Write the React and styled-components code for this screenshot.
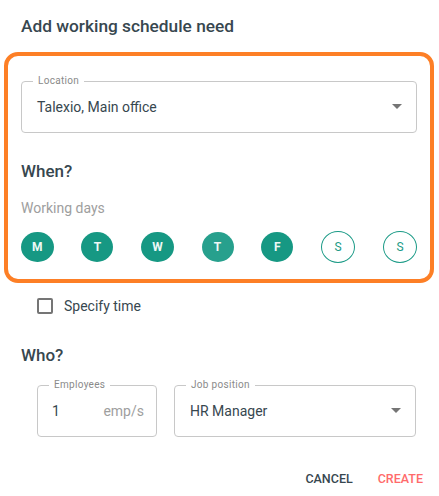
import styled, { createGlobalStyle } from "styled-components";

const GlobalStyle = createGlobalStyle`
    body {
        margin: 0;
        background: #ffffff;
        font-family: Roboto, "Liberation Sans", sans-serif;
        color: #37474f;
    }
`;

const days = [
    { key: "mon", label: "M", on: true },
    { key: "tue", label: "T", on: true },
    { key: "wed", label: "W", on: true },
    { key: "thu", label: "T", on: true, hover: true },
    { key: "fri", label: "F", on: true },
    { key: "sat", label: "S", on: false },
    { key: "sun", label: "S", on: false },
];

function App() {
    const renderedDays = days.map((day) => (
        <DayButton key={day.key} $on={day.on} $hover={day.hover}>
            {day.label}
        </DayButton>
    ));

    return (
        <Dialog>
            <GlobalStyle />
            <Title>Add working schedule need</Title>

            <Highlight>
                <Field>
                    <FieldLabel>Location</FieldLabel>
                    <FieldValue>Talexio, Main office</FieldValue>
                    <Caret />
                </Field>

                <Heading $top={28}>When?</Heading>
                <SubLabel>Working days</SubLabel>
                <DaysRow>{renderedDays}</DaysRow>
            </Highlight>

            <CheckRow>
                <CheckBox />
                <span>Specify time</span>
            </CheckRow>

            <Heading $top={28} $indent={21}>
                Who?
            </Heading>

            <FieldsRow>
                <Field $width={120}>
                    <FieldLabel>Employees</FieldLabel>
                    <FieldValue $pad={14}>1</FieldValue>
                    <Unit>emp/s</Unit>
                </Field>
                <Field $grow>
                    <FieldLabel>Job position</FieldLabel>
                    <FieldValue>HR Manager</FieldValue>
                    <Caret />
                </Field>
            </FieldsRow>

            <Actions>
                <ActionButton>Cancel</ActionButton>
                <ActionButton $primary>Create</ActionButton>
            </Actions>
        </Dialog>
    );
}

const Dialog = styled.div`
    width: 439px;
    height: 496px;
    box-sizing: border-box;
    display: flex;
    flex-direction: column;
    overflow: hidden;
`;

const Title = styled.h2`
    margin: 0;
    padding: 15px 21px 0;
    font-size: 17.3px;
    line-height: 22px;
    font-weight: 500;
    color: #37474f;
`;

const Highlight = styled.div`
    margin: 15px 5px 0 4px;
    border: 4px solid #fd7f26;
    border-radius: 14px;
    padding: 25px 13px 16px;
    display: flex;
    flex-direction: column;
`;

const Field = styled.div`
    position: relative;
    box-sizing: border-box;
    height: 52px;
    width: ${({ $width }) => ($width ? `${$width}px` : "auto")};
    flex: ${({ $grow }) => ($grow ? "1" : "none")};
    border: 1px solid #c8c8c8;
    border-radius: 4px;
    display: flex;
    align-items: center;
`;

const FieldLabel = styled.span`
    position: absolute;
    top: -7px;
    left: 11px;
    padding: 0 5px;
    background: #ffffff;
    font-size: 10px;
    line-height: 12px;
    color: #8a8a8a;
    letter-spacing: 0.3px;
`;

const FieldValue = styled.span`
    flex: 1;
    padding-left: ${({ $pad }) => ($pad ? `${$pad}px` : "15px")};
    font-size: 14px;
    color: #37474f;
`;

const Caret = styled.span`
    width: 0;
    height: 0;
    margin-right: 14px;
    margin-top: -2px;
    border-left: 5px solid transparent;
    border-right: 5px solid transparent;
    border-top: 5px solid #757575;
`;

const Unit = styled.span`
    padding-right: 12px;
    font-size: 14px;
    color: #9e9e9e;
`;

const Heading = styled.h3`
    margin: ${({ $top }) => $top}px 0 0 ${({ $indent }) => ($indent ? `${$indent}px` : "0")};
    font-size: 17px;
    line-height: 20px;
    font-weight: 500;
    color: #37474f;
`;

const SubLabel = styled.div`
    margin-top: 17px;
    font-size: 14px;
    line-height: 20px;
    color: #9e9e9e;
`;

const DaysRow = styled.div`
    margin-top: 13px;
    display: flex;
    justify-content: space-between;
    align-items: center;
`;

const DayButton = styled.button`
    box-sizing: content-box;
    height: 30px;
    min-width: 10px;
    padding: 0 11px;
    border-radius: 50%;
    border: ${({ $on }) => ($on ? "none" : "1px solid #1a9a86")};
    background: ${({ $on, $hover }) =>
        $on ? ($hover ? "#27a08d" : "#169883") : "#ffffff"};
    color: ${({ $on }) => ($on ? "#eef8f6" : "#1a9a86")};
    font-family: Roboto, "Liberation Sans", sans-serif;
    font-size: 12px;
    font-weight: ${({ $on }) => ($on ? 700 : 400)};
    display: flex;
    align-items: center;
    justify-content: center;
`;

const CheckRow = styled.label`
    margin: 12px 0 0 37px;
    height: 24px;
    display: flex;
    align-items: center;
    gap: 11px;
    font-size: 14px;
    color: #37474f;
`;

const CheckBox = styled.span`
    box-sizing: border-box;
    width: 16px;
    height: 16px;
    border: 2px solid #757575;
    border-radius: 2px;
`;

const FieldsRow = styled.div`
    margin: 20px 23px 0 37px;
    display: flex;
    gap: 17px;
`;

const Actions = styled.div`
    margin-top: 23px;
    padding-right: 8px;
    display: flex;
    justify-content: flex-end;
`;

const ActionButton = styled.button`
    height: 36px;
    padding: 0 8px;
    margin-left: 9px;
    border: none;
    background: transparent;
    font-family: Roboto, "Liberation Sans", sans-serif;
    font-size: 12.5px;
    font-weight: 500;
    letter-spacing: 0;
    text-transform: uppercase;
    color: ${({ $primary }) => ($primary ? "#ff6b6b" : "#37474f")};
`;

export default App;
